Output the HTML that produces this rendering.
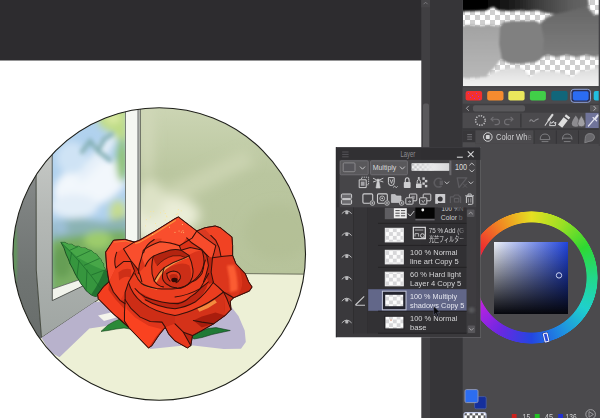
<!DOCTYPE html>
<html lang="en">
<head>
<meta charset="utf-8">
<title>Layer - Multiply</title>
<style>
html,body{margin:0;padding:0;background:#fff;}
body{width:600px;height:418px;overflow:hidden;position:relative;filter:blur(0.6px);font-family:"Liberation Sans","Noto Sans CJK JP",sans-serif;}
svg{position:absolute;left:0;top:0;display:block;opacity:.999;}
text{font-family:"Liberation Sans","Noto Sans CJK JP",sans-serif;}
</style>
</head>
<body>
<svg width="600" height="418" viewBox="0 0 600 418">
<defs>
  <pattern id="chk" width="10" height="10" patternUnits="userSpaceOnUse">
    <rect width="10" height="10" fill="#ffffff"/>
    <rect width="5" height="5" fill="#cfcfcf"/>
    <rect x="5" y="5" width="5" height="5" fill="#cfcfcf"/>
  </pattern>
  <pattern id="chkd" width="5.6" height="5.6" patternUnits="userSpaceOnUse" x="464" y="412.6">
    <rect width="5.6" height="5.6" fill="#ffffff"/><rect width="2.8" height="2.8" fill="#5a5a5c"/><rect x="2.8" y="2.8" width="2.8" height="2.8" fill="#5a5a5c"/>
  </pattern>
  <pattern id="chks" width="5" height="5" patternUnits="userSpaceOnUse">
    <rect width="5" height="5" fill="#ffffff"/>
    <rect width="2.5" height="2.5" fill="#cdcdcd"/>
    <rect x="2.5" y="2.5" width="2.5" height="2.5" fill="#cdcdcd"/>
  </pattern>
  <filter id="b1" x="-20%" y="-20%" width="140%" height="140%"><feGaussianBlur stdDeviation="1"/></filter>
  <filter id="b2" x="-20%" y="-20%" width="140%" height="140%"><feGaussianBlur stdDeviation="2"/></filter>
  <filter id="b3" x="-30%" y="-30%" width="160%" height="160%"><feGaussianBlur stdDeviation="3.5"/></filter>
  <filter id="b6" x="-40%" y="-40%" width="180%" height="180%"><feGaussianBlur stdDeviation="6"/></filter>
  <clipPath id="circ"><circle cx="159.2" cy="254" r="146.2"/></clipPath>
  <clipPath id="glassclip"><path d="M52.2 100 L125.5 100 L125.5 263.9 L52.3 289 Z"/></clipPath>
  <clipPath id="prev"><rect x="463" y="0" width="137" height="86.2"/></clipPath>
</defs>

<!-- ===== canvas & chrome backgrounds ===== -->
<g id="chrome">
<rect x="0" y="0" width="600" height="418" fill="#ffffff"/>
<rect x="0" y="0" width="424" height="60.5" fill="#2d2c2f"/>
<rect x="421.3" y="0" width="8.7" height="418" fill="#403f42"/>
<rect x="430" y="0" width="33" height="418" fill="#363538"/>
<rect x="423" y="103.4" width="6" height="226" rx="2" fill="#5a595c"/>
<rect x="421.3" y="0" width="8.7" height="7.4" fill="#464548"/>
<path d="M423.6 4.2 L425.6 2.2 L427.6 4.2" fill="none" stroke="#7d7c80" stroke-width="0.9"/>
<rect x="462.7" y="0" width="137.3" height="418" fill="#4b4a4d"/>
</g>

<!--ART-S-->
<!-- ===== illustration ===== -->
<defs>
  <linearGradient id="gDark" x1="0" y1="0" x2="0" y2="1">
    <stop offset="0" stop-color="#9d9f9e"/><stop offset="0.4" stop-color="#7f8382"/><stop offset="0.7" stop-color="#6f7472"/><stop offset="1" stop-color="#676c6a"/>
  </linearGradient>
  <linearGradient id="gMid" x1="0" y1="0" x2="0" y2="1">
    <stop offset="0" stop-color="#d2d4d1"/><stop offset="0.5" stop-color="#b4b8b5"/><stop offset="1" stop-color="#9fa5a2"/>
  </linearGradient>
  <linearGradient id="gSky" x1="0" y1="0" x2="0.5" y2="1">
    <stop offset="0" stop-color="#a5c9ea"/><stop offset="0.55" stop-color="#b9d6ee"/><stop offset="1" stop-color="#8db6dc"/>
  </linearGradient>
  <linearGradient id="gWall" gradientUnits="userSpaceOnUse" x1="0" y1="107" x2="0" y2="275">
    <stop offset="0" stop-color="#ccd5b4"/><stop offset="0.22" stop-color="#c2cda8"/><stop offset="0.4" stop-color="#bac69f"/><stop offset="1" stop-color="#b7c39b"/>
  </linearGradient>
</defs>
<g clip-path="url(#circ)">
  <!-- wall -->
  <rect x="0" y="100" width="320" height="310" fill="url(#gWall)"/>
  <g filter="url(#b6)">
    <path d="M138 200 L245 150 L255 164 L138 224 Z" fill="#ced6b4" opacity=".8"/>
    <ellipse cx="164" cy="215" rx="36" ry="19" fill="#eaedd7"/>
    <ellipse cx="150" cy="228" rx="14" ry="14" fill="#eceedb"/>
    <ellipse cx="150" cy="200" rx="14" ry="20" fill="#dde2c6"/>
    <ellipse cx="278" cy="232" rx="34" ry="28" fill="#afbc92" opacity=".5"/>
    <ellipse cx="147" cy="140" rx="7" ry="40" fill="#d3dabb" opacity=".8"/>
  </g>
  <!-- table -->
  <path d="M30 346 L41.5 337.7 L140 271.8 L320 274.2 L320 410 L0 410 Z" fill="#edf0d6"/>
  <path d="M140 272.6 L320 274.3" stroke="#4a4f3c" stroke-width="0.8" fill="none"/>
  <!-- window: outer dark frame -->
  <path d="M0 100 L36 100 L36.3 270 L41.5 337.7 L20 352 L0 352 Z" fill="url(#gDark)"/>
  <ellipse cx="15" cy="255" rx="2.2" ry="30" fill="#5f9e58" filter="url(#b1)" opacity=".8"/>
  <!-- mid frame -->
  <path d="M36 100 L140 100 L140 271.8 L41.5 337.7 L36.3 270 Z" fill="url(#gMid)"/>
  <!-- glass -->
  <path d="M52.2 100 L125.5 100 L125.5 263.9 L52.3 289 Z" fill="url(#gSky)"/>
  <g clip-path="url(#glassclip)">
    <g filter="url(#b3)">
      <rect x="48" y="100" width="82" height="120" fill="#b1d2ee"/>
      <ellipse cx="90" cy="184" rx="38" ry="22" transform="rotate(-20 90 184)" fill="#f2f7fc"/>
      <ellipse cx="72" cy="158" rx="15" ry="16" fill="#cfe3f5"/>
      <ellipse cx="74" cy="206" rx="24" ry="12" fill="#e3eef8"/>
      <ellipse cx="97" cy="158" rx="30" ry="6" transform="rotate(-52 97 158)" fill="#e6f0f9"/>
      <path d="M94 110 L128 104 L128 142 L118 139 L109 132 L100 127 Z" fill="#bedb86"/>
      <ellipse cx="113" cy="118" rx="8" ry="6" fill="#d9e9a2"/>
      <ellipse cx="122" cy="160" rx="6" ry="22" fill="#8fc272"/>
      <ellipse cx="118" cy="212" rx="9" ry="12" fill="#c4db92"/>
      <path d="M50 222 L80 218 L105 222 L128 216 L128 250 L50 250 Z" fill="#8bb3b4"/>
      <path d="M50 240 L75 236 L100 232 L128 230 L128 275 L50 295 Z" fill="#78ad62"/>
      <ellipse cx="98" cy="240" rx="14" ry="9" fill="#9dcc6c"/>
      <ellipse cx="62" cy="262" rx="10" ry="16" fill="#669e55"/>
      <ellipse cx="114" cy="252" rx="10" ry="10" fill="#7db463"/>
      <ellipse cx="60" cy="228" rx="8" ry="6" fill="#9ec0d8"/>
    </g>
    <g filter="url(#b2)" fill="none" stroke="#86b1b6" stroke-width="4.2" stroke-linecap="round">
      <path d="M82 152 L90 141 L98 151 L104 139 M98 151 L110 160 M104 139 L112 134"/>
    </g>
  </g>
  <!-- white strip under glass -->
  <path d="M52.3 289 L125.5 263.9 L125.5 265.6 L78.6 288 L52.3 300.6 Z" fill="#f2f4ec"/>
  <!-- right white frame -->
  <rect x="125.5" y="100" width="12.2" height="170" fill="#f5f7f2"/>
  <rect x="137.5" y="100" width="1.3" height="172" fill="#6f7370"/>
  <rect x="138.8" y="100" width="1" height="172" fill="#e4e7df"/>
  <rect x="139.7" y="100" width="1" height="172" fill="#4c4f4a"/>
  <!-- frame lines -->
  <path d="M36 100 L36.3 270 L41.5 337.7 L140 271.8" fill="none" stroke="#33372f" stroke-width="0.8"/>
  <path d="M52.2 100 L52.3 300.6 L78.6 288 L125.5 265.6" fill="none" stroke="#3a3e38" stroke-width="0.8"/>
  <path d="M52.3 289 L125.5 263.9 M125.5 100 L125.5 264" fill="none" stroke="#4d524a" stroke-width="0.7"/>
  <!-- sill shadow (purple) -->
  <path d="M41.5 337.7 L94.2 302.3 L112 300 L120 318 L106 326 L89.4 328.6 L59.5 357.3 L50 352 Z" fill="#b8b2cc"/>
  <path d="M98 315.5 L111 312.5 L118 317 L104 321 Z" fill="#f4f4ec"/>
  <!-- rose cast shadow -->
  <path d="M225 300 L233 309 L238.5 316 L244.7 330.5 L245.8 342 L241 348.7 L223.6 349 L189 345 L150 349 L140 340 Z" fill="#bcb6d1"/>
<!--LEAVES-S-->
<!-- leaves -->
<g stroke-linejoin="round">
  <path d="M60.9 242.4 L64.6 242.4 L68.4 244.3 L71.6 244.3 L75.1 246.4 L78.6 246.3 L81.8 248.1 L85.2 248 L88.5 249.9 L91.6 250.6 L93.9 253.1 L96.8 254.4 L98.6 257.3 L100.8 259.2 L101.6 261.5 L103.6 264 L103.6 266.5 L105.2 269 L105.6 271.5 L110 272 L111 280 L108 286 L102 290 L100.4 292.4 L98.6 294.8 L96.1 296.5 L93.7 296 L91 294.8 L88.6 292.8 L86 290.6 L83.6 287 L81 283.9 L78.2 279 L75.1 273.9 L72.8 268.8 L70.1 263.8 L68.2 258.8 L65.9 253.8 L64 248 Z" fill="#36963e" stroke="#123c1a" stroke-width="0.8"/>
  <path d="M60.9 242.4 L64.6 242.4 L68.4 244.3 L71.6 244.3 L75.1 246.4 L78.6 246.3 L81.8 248.1 L85.2 248 L88.5 249.9 L91.6 250.6 L93.9 253.1 L96.8 254.4 L98.6 257.3 L100.8 259.2 L101.6 261.5 L103.6 264 L103.6 266.5 L105.2 269 L105.6 271.5 L110 272 Q96 268 78.5 258 Z" fill="#47a748"/>
  <path d="M91 294.8 L93.7 296 L96.1 296.5 L98.6 294.8 L100.4 292.4 L102 290 L108 286 L111 280 L110 272 L104 270 Q100 282 91 294.8 Z" fill="#217230"/>
  <path d="M60.9 242.4 Q80 260 100.3 288 M69.5 250.4 L78 246.6 M76.5 257.2 L90.6 250.6 M84 265.4 L99.6 258.4 M91.4 275 L104.6 270 M71.6 252.4 L69.5 264 M79 260 L76.8 277.6 M87 269.6 L86 290.4" fill="none" stroke="#1b6a2b" stroke-width="0.7"/>
  <path d="M101 331.4 L108 325 L114 321.5 L122 318 L128 322 L133 329.5 L124 328 L116 329 L108 330.5 Z" fill="#2b8a38" stroke="#14401c" stroke-width="0.6"/>
  <path d="M191 336.8 L200 331.5 L208 328.5 L216 327.6 L230.3 330.5 L221 332.5 L212 334.5 L202 337.5 L194 339 Z" fill="#1f7a36" stroke="#123a1c" stroke-width="0.6"/>
</g>
<!--LEAVES-E-->
<!--ROSE-S-->
<!-- rose -->
<g transform="translate(95,212) scale(0.33473)" stroke-linejoin="round" stroke-linecap="round">
  <!-- silhouette -->
  <path d="M55 85 L32 120 L35 165 L42 209 L25 224 L8 247 L10 259 L55 304 L100 344 L160 406 L170 399 L190 369 L210 344 L220 364 L239 385 L276 406 L286 399 L291 369 L319 354 L354 334 L389 309 L406 291 L404 266 L414 256 L461 236 L469 224 L459 209 L449 185 L421 155 L411 130 L411 100 L409 75 L374 47 L359 42 L329 47 L304 57 L249 15 L239 20 L175 60 L132 85 L117 90 L90 82 Z" fill="#e4351a" stroke="#3a1008" stroke-width="3.2"/>
  <!-- L : left petal -->
  <path d="M55 85 L90 82 L117 90 L85 110 L107 147 L85 148 L62 167 L42 209 L35 165 L32 120 Z" fill="#f94c2d"/>
  <path d="M65 120 Q55 145 62 167 L85 148 L107 147 L85 110 Z" fill="#ec3d1f"/>
  <!-- M petal -->
  <path d="M62 167 L85 148 L107 148 L118 176 L108 196 L100 210 L90 240 L75 264 L55 239 L42 209 Z" fill="#ef4021"/>
  <path d="M107 148 L118 176 L108 196 L100 210 L90 240 L100 250 L130 240 L140 209 L127 170 Z" fill="#be2612"/>
  <path d="M70 180 Q90 165 108 172 L108 196 Q88 188 72 205 Z" fill="#ce2f17"/>
  <!-- LL petal -->
  <path d="M42 209 L25 224 L8 247 L10 259 L55 304 L88 326 L88 300 L90 262 L75 264 L55 239 Z" fill="#f33e1f"/>
  <path d="M42 209 L55 239 L75 264 L90 262 L88 290 L62 262 L40 232 Z" fill="#cc2e16"/>
  <!-- T : big upper-left petal -->
  <path d="M85 110 L117 90 L132 85 L175 60 L239 20 L249 15 L304 57 L290 78 L257 100 Q225 88 195 89 Q165 100 145 120 L140 150 L150 185 L160 215 L140 209 L135 190 L127 170 L107 145 Z" fill="#f94e2d"/>
  <path d="M145 122 Q150 98 177 82 Q185 78 200 80 L195 89 Q165 100 145 122 Z" fill="#e54122"/>
  <path d="M145 120 L140 150 L150 185 L160 215 L175 200 L165 165 L160 135 Z" fill="#e13a1e"/>
  <!-- TC -->
  <path d="M304 57 L326 75 L354 95 L361 100 L356 120 L351 137 L334 130 L319 112 L289 92 L274 77 L290 78 Z" fill="#f74b2b"/>
  <!-- TR -->
  <path d="M304 57 L329 47 L359 42 L374 47 L409 75 L411 100 L411 130 L384 132 L351 137 L356 120 L361 100 L354 95 L326 75 Z" fill="#f14223"/>
  <path d="M346 70 L361 85 L371 107 L376 131 L351 137 L356 120 L361 100 L354 95 L326 75 L304 57 L329 52 Z" fill="#da3921"/>
  <!-- R -->
  <path d="M351 137 L384 132 L411 130 L421 155 L449 185 L459 209 L469 224 L461 236 L414 256 L404 266 L406 291 L389 309 L384 239 L339 209 L331 190 L339 160 L334 132 Z" fill="#dc361c"/>
  <path d="M334 132 L351 137 L347 180 L354 212 L368 224 L384 239 L389 309 L360 300 L339 209 L331 190 L339 160 Z" fill="#bb2410"/>
  <path d="M394 160 L416 158 Q428 200 426 234 L404 240 Q404 200 394 160 Z" fill="#fb5b33" filter="url(#b3)"/>
  <path d="M432 170 L449 185 L459 209 L469 224 L461 236 L424 252 Q440 232 440 210 Q438 190 432 170 Z" fill="#cc2b14"/>
  <path d="M384 239 L394 259 L406 291 L404 266 L414 256 L400 240 Z" fill="#c82d16"/>
  <!-- inner rose base -->
  <path d="M145 120 Q165 100 195 89 Q225 88 257 100 L274 77 L289 92 L319 112 L334 130 L339 160 L331 190 L324 209 Q310 250 285 265 Q250 285 200 275 Q150 260 125 225 L120 185 L140 150 Z" fill="#db3319"/>
  <!-- lower bands -->
  <path d="M120 185 Q130 210 150 222 Q190 235 245 229 Q290 215 320 174 L330 144 L339 160 L331 190 L324 209 L339 209 Q320 235 314 229 L354 209 L384 239 Q340 275 289 294 Q260 305 239 309 Q180 300 140 270 Q110 245 100 210 Z" fill="#eb3d1f"/>
  <path d="M120 229 Q150 254 200 269 Q250 278 285 254 Q305 240 315 229 L339 209 Q330 245 299 269 Q270 285 239 289 Q190 285 150 262 Z" fill="#bd2512"/>
  <path d="M100 210 L90 240 L90 262 L108 289 L135 314 L165 327 L200 329 L210 344 L239 334 L239 309 Q180 300 140 270 Q110 245 100 210 Z" fill="#cd2d16"/>
  <path d="M239 309 Q260 305 289 294 Q340 275 384 239 L389 309 L354 334 L319 354 L291 369 L264 359 L239 334 Z" fill="#d43219"/>
  <path d="M294 324 L319 312 L360 300 L389 309 L354 334 L319 345 Z" fill="#a91d0d"/>
  <path d="M305 288 Q335 278 358 262 L364 270 Q340 288 312 298 Z" fill="#f38a3e"/>
  <!-- BR2 -->
  <path d="M239 334 L264 359 L286 399 L276 406 L239 385 L220 364 L210 344 Z" fill="#e7381c"/>
  <path d="M264 359 L291 369 L286 399 Z" fill="#ba2310"/>
  <!-- BF -->
  <path d="M90 262 L88 300 L88 326 L100 344 L160 406 L170 399 L190 369 L210 344 L200 329 L165 327 L135 314 L108 289 Z" fill="#fa4220"/>
  <path d="M90 262 L108 289 L135 314 L165 327 L200 329 L210 344 L200 350 L160 340 L120 315 L95 290 Z" fill="#df351b"/>
  <path d="M160 406 L170 399 L190 369 L210 344 L200 350 L180 375 Z" fill="#ce2d15"/>
  <!-- inner petals -->
  <!-- ring area base -->
  <path d="M139.5 134 L144.5 114 Q165 98 194.5 88.7 Q225 90 252 101 L257 114 L284.5 106 L319.5 113.7 L339.5 133.7 L329.5 148.7 L319.5 183.7 Q305 205 289.5 208.7 Q270 228 244.5 228.7 Q200 232 184.5 228.7 Q150 222 139.5 213.7 Q125 200 129.5 183.7 L132 158.7 Z" fill="#dc351b"/>
  <!-- A rim -->
  <path d="M139.5 134 L144.5 114 Q165 98 194.5 88.7 Q225 90 252 101 L257 114 Q235 108 209.5 118.7 Q190 124 174.5 132 Q158 142 150 162 Z" fill="#f9532f"/>
  <!-- dark under A -->
  <path d="M174.5 132 Q190 124 209.5 118.7 Q235 108 257 114 L279.5 128.7 L282 131 Q262 134 240 146 Q218 158 207 166 Q196 176 188 192 L177 206 Q168 185 169.5 163.7 Q170 146 174.5 132 Z" fill="#e53a1d"/>
  <path d="M174.5 132 Q190 124 209.5 118.7 Q235 108 257 114 L279.5 128.7 L274 137 Q255 127 233 131 Q205 138 186 160 Q176 150 174.5 132 Z" fill="#b32410"/>
  <path d="M186 160 Q205 138 233 131 Q255 127 274 137" fill="none" stroke="#3a1008" stroke-width="2.2"/>
  <!-- left of ring (light) -->
  <path d="M150 162 Q158 142 174.5 132 Q170 146 169.5 163.7 Q168 185 177 206 Q188 222 204.5 223.7 L184.5 228.7 Q150 222 139.5 213.7 Q128 200 129.5 183.7 Z" fill="#f14423"/>
  <!-- top-right small petals -->
  <path d="M257 114 L284.5 106 L319.5 113.7 L329.5 148.7 L319.5 183.7 Q305 205 289.5 208.7 Q296 190 292 168.7 Q290 150 279.5 128.7 Z" fill="#db341b"/>
  <path d="M257 114 L284.5 106 L319.5 113.7 Q300 116 279.5 128.7 Z" fill="#f34827"/>
  <path d="M319.5 113.7 L339.5 133.7 L329.5 148.7 L319.5 183.7 Q332 150 319.5 113.7 Z" fill="#c92d17"/>
  <!-- inner petal -->
  <path d="M207 166 Q235 148 264.5 138.7 L282 131 Q290 150 292 168.7 Q296 190 284.5 208.7 Q270 228 244.5 226.2 Q228 226 219.5 218.7 Q205 210 202 198.7 Q200 185 207 166 Z" fill="#eb3d1e"/>
  <path d="M204.5 173.7 Q225 160 250 155 Q270 152 282 160 Q290 180 284.5 208.7 Q270 228 244.5 226.2 Q228 226 219.5 218.7 Q205 210 202 198.7 Z" fill="#cb2e17"/>
  <!-- highlights -->
  <path d="M177 206 Q190 180 207 166 Q235 148 264.5 138.7 L282 131 L278 137 Q240 150 212 171 Q196 186 184 210 Z" fill="#f5a050"/>
  <!-- core -->
  <path d="M214.5 183.7 Q224 177 234.5 176.2 Q246 177 252 183.7 Q257 191 254.5 198.7 Q250 208 242 211.2 Q232 212 224.5 206.2 Q215 198 214.5 183.7 Z" fill="#e43c20"/>
  <path d="M222 190 Q232 183 244 187 Q250 193 248 201 Q242 209 232 208 Q224 203 222 190 Z" fill="#bb2712"/>
  <ellipse cx="237.5" cy="203.2" rx="9.5" ry="7" fill="#2f0904"/>
  <path d="M121 94 L134 90 L177 65 L240 25.5" fill="none" stroke="#f6983e" stroke-width="3.2"/>
  <path d="M58 90 L92 87 L114 93" fill="none" stroke="#f4843a" stroke-width="2.4"/>
  <path d="M122 187 Q130 205 141 215 Q152 224 184 231" fill="none" stroke="#f59a46" stroke-width="2.2"/>
  <!-- line art -->
  <g fill="none" stroke="#35100a" stroke-width="3.1">
    <path d="M117 90 L85 110 L107 145 L127 170 L135 190 L140 209"/>
    <path d="M65 120 Q55 145 62 167 L85 148 L107 148 L118 176 L108 196 L100 210 L90 240 L90 262"/>
    <path d="M42 209 L55 239 L75 264 L90 274"/>
    <path d="M145 122 Q150 98 177 82"/>
    <path d="M129.5 183.7 L132 158.7 L139.5 134 L144.5 114 Q165 98 194.5 88.7 Q225 90 252 101 L290 78 L304 57"/>
    <path d="M252 101 L257 114 L284.5 106 L319.5 113.7 L339.5 133.7"/>
    <path d="M304 57 L326 75 L354 95 L361 100 L356 120 L351 137"/>
    <path d="M346 70 L361 85 L371 107 L376 131"/>
    <path d="M274 77 L289 92 L319 112 L334 130 L339 160 L331 190 L324 209"/>
    <path d="M351 137 L384 132 L411 130"/>
    <path d="M351 137 L347 180 L354 212 L368 224 L384 239 L394 259 L406 291"/>
    <path d="M414 256 L384 239"/>
    <path d="M150 162 Q158 142 174.5 132 Q190 124 209.5 118.7 Q235 108 257 114 L279.5 128.7 Q290 150 292 168.7 Q296 190 284.5 208.7 Q270 228 244.5 228.7"/>
    <path d="M174.5 132 Q170 146 169.5 163.7 Q168 185 177 206 Q188 222 204.5 223.7"/>
    <path d="M177 206 Q190 180 207 166 Q235 148 264.5 138.7 L282 131"/>
    <path d="M207 166 Q200 185 202 198.7 Q205 210 219.5 218.7 Q228 226 244.5 226.2"/>
    <path d="M319.5 113.7 Q332 150 319.5 183.7 Q305 205 289.5 208.7"/>
    <path d="M119.5 183.7 Q128 203 139.5 213.7 Q150 222 184.5 228.7 Q215 232 244.5 228.7 Q270 224 289.5 208.7 Q310 195 319.5 173.7 L329.5 143.7"/>
    <path d="M119.5 228.7 Q130 243 149.5 253.7 Q170 263 199.5 268.7 Q225 274 249.5 273.7 Q270 268 284.5 253.7 Q302 243 314.5 228.7 L339.5 183.7"/>
    <path d="M239 254 Q279 249 314 229 L339 209"/>
    <path d="M150 262 Q190 285 239 289 Q270 285 299 269 Q330 245 354 209"/>
    <path d="M100 210 Q110 245 140 270 Q180 300 239 309 Q260 305 289 294 Q340 275 384 239"/>
    <path d="M90 262 L88 300 L88 326 L100 344"/>
    <path d="M90 262 L108 289 L135 314 L165 327 L200 329 L210 344"/>
    <path d="M239 334 L264 359 L286 399"/>
    <path d="M264 359 L291 369"/>
    <path d="M294 324 L319 329 L354 334"/>
    <path d="M214.5 183.7 Q224 177 234.5 176.2 Q246 177 252 183.7 Q257 191 254.5 198.7 Q250 208 242 211.2"/>
    <path d="M214.5 183.7 Q215 198 224.5 206.2"/>
  </g>
  <path d="M55 85 L32 120 L35 165 L42 209 L25 224 L8 247 L10 259 L55 304 L100 344 L160 406 L170 399 L190 369 L210 344 L220 364 L239 385 L276 406 L286 399 L291 369 L319 354 L354 334 L389 309 L406 291 L404 266 L414 256 L461 236 L469 224 L459 209 L449 185 L421 155 L411 130 L411 100 L409 75 L374 47 L359 42 L329 47 L304 57 L249 15 L239 20 L175 60 L132 85 L117 90 L90 82 Z" fill="none" stroke="#38100a" stroke-width="2.9"/>
</g>
<g fill="#ffe58a" opacity=".85"><rect x="153.2" y="210.9" width="0.9" height="0.9"/><rect x="160.0" y="212.3" width="0.9" height="0.9"/><rect x="145.9" y="219.2" width="0.9" height="0.9"/><rect x="182.5" y="230.4" width="0.9" height="0.9"/><rect x="175.9" y="214.2" width="0.9" height="0.9"/><rect x="166.1" y="215.7" width="0.9" height="0.9"/><rect x="150.4" y="211.0" width="0.9" height="0.9"/><rect x="152.2" y="234.0" width="0.9" height="0.9"/><rect x="178.6" y="230.6" width="0.9" height="0.9"/><rect x="177.4" y="213.4" width="0.9" height="0.9"/><rect x="156.3" y="225.6" width="0.9" height="0.9"/><rect x="174.5" y="231.9" width="0.9" height="0.9"/><rect x="180.8" y="210.4" width="0.9" height="0.9"/><rect x="169.1" y="226.8" width="0.9" height="0.9"/><rect x="164.8" y="213.0" width="0.9" height="0.9"/><rect x="163.4" y="210.5" width="0.9" height="0.9"/><rect x="183.2" y="232.2" width="0.9" height="0.9"/><rect x="166.5" y="216.4" width="0.9" height="0.9"/><rect x="182.1" y="224.0" width="0.9" height="0.9"/><rect x="180.9" y="231.7" width="0.9" height="0.9"/><rect x="164.9" y="219.6" width="0.9" height="0.9"/><rect x="168.8" y="220.1" width="0.9" height="0.9"/><rect x="149.9" y="216.5" width="0.9" height="0.9"/><rect x="177.9" y="209.2" width="0.9" height="0.9"/><rect x="145.0" y="225.5" width="0.9" height="0.9"/><rect x="155.1" y="223.0" width="0.9" height="0.9"/></g>
<!--ROSE-E-->
</g>
<circle cx="159.2" cy="254" r="146.3" fill="none" stroke="#1e1f1a" stroke-width="1.1"/>

<!--ART-E-->

<!--PREVIEW-S-->
<!-- ===== sub view preview ===== -->
<defs>
  <linearGradient id="gTopBand" x1="0" y1="0" x2="1" y2="0">
    <stop offset="0" stop-color="#000"/><stop offset="0.2" stop-color="#050505"/><stop offset="0.45" stop-color="#222"/><stop offset="0.62" stop-color="#404040"/><stop offset="0.85" stop-color="#5c5c5c"/><stop offset="1" stop-color="#666"/>
  </linearGradient>
  <linearGradient id="gMidCloud" x1="0" y1="0" x2="1" y2="0">
    <stop offset="0" stop-color="#b0b0b0"/><stop offset="0.22" stop-color="#a6a6a6"/><stop offset="0.34" stop-color="#828282"/><stop offset="0.62" stop-color="#7b7b7b"/><stop offset="0.78" stop-color="#8c8c8c"/><stop offset="1" stop-color="#878787"/>
  </linearGradient>
  <linearGradient id="gLeftCloud" x1="0" y1="0" x2="0" y2="1"><stop offset="0" stop-color="#a2a2a2"/><stop offset="1" stop-color="#b8b8b8"/></linearGradient>
  <linearGradient id="gRightCloud" x1="0" y1="0" x2="0" y2="1"><stop offset="0" stop-color="#666666"/><stop offset="1" stop-color="#7e7e7e"/></linearGradient>
  <linearGradient id="gLowCloud" x1="0" y1="0" x2="0" y2="1">
    <stop offset="0" stop-color="#dadada"/><stop offset="1" stop-color="#f6f6f6"/>
  </linearGradient>
</defs>
<g clip-path="url(#prev)">
  <rect x="462" y="0" width="138" height="87" fill="url(#chk)"/>
  <g filter="url(#b1)">
    <!-- lower light cloud -->
    <path d="M460 78 L472 79 L486 77 L492 73 L500 70 L510 68 L521 68 L526 72 L530 77 L535 73 L541 71 L550 71 L558 72 L566 74 L572 77 L576 74 L580 71 L588 70 L596 68 L602 67 L602 90 L460 90 Z" fill="url(#gLowCloud)"/>
    <!-- mid-left cloud -->
    <path d="M460 26 L470 25 L480 26 L490 25 L502 27 L504 60 L500 60 L496 66 L490 72 L486 77 L472 78 L460 78 Z" fill="url(#gLeftCloud)"/>
    <!-- right cloud -->
    <path d="M540 24 L546 18 L554 14 L562 11 L572 8 L586 5 L590 10 L594 15 L602 14 L602 55 L594 57 L586 55 L576 57 L566 55 L556 57 L548 55 L540 58 Z" fill="url(#gRightCloud)"/>
    <!-- centre cloud -->
    <path d="M500 26 L504 22 L512 21 L524 21 L536 21 L541 24 L544 40 L542 58 L536 62 L528 63 L518 64 L508 63 L502 60 L499 44 Z" fill="#808080"/>
    <!-- top dark band -->
    <path d="M460 -2 L588 -2 L589 6 L580 8 L566 12 L556 14 L546 13 L538 10.5 L528 11 L520 10.5 L510 11 L500 10.5 L497 9.5 L494 7 L490 8 L486 10.5 L474 11 L460 11.5 Z" fill="url(#gTopBand)"/>
  </g>
</g>
<rect x="462.7" y="86.2" width="137.3" height="1.2" fill="#39383b"/>
<!--PREVIEW-E-->

<!--RIGHT-S-->
<!-- ===== right panel ===== -->
<g id="rightpanel">
  <!-- swatch row -->
  <rect x="462.7" y="87.4" width="137.3" height="16.4" fill="#4b4a4d"/>
  <rect x="465.6" y="91" width="16.5" height="9.6" rx="2" fill="#f3302e"/>
  <g fill="#b22ad0"><rect x="468" y="93" width="1" height="1"/><rect x="472" y="95" width="1" height="1"/><rect x="476" y="93" width="1" height="1"/><rect x="470" y="97" width="1" height="1"/><rect x="478" y="96" width="1" height="1"/><rect x="474" y="98" width="1" height="1"/><rect x="479" y="99" width="1" height="1"/></g>
  <rect x="487.2" y="91" width="16.3" height="9.6" rx="2" fill="#f58b2f"/>
  <rect x="508.3" y="91" width="16.3" height="9.6" rx="2" fill="#ebe75c"/>
  <rect x="529.9" y="91" width="16" height="9.6" rx="2" fill="#41cf48"/>
  <rect x="551.3" y="91" width="16.3" height="9.6" rx="2" fill="#11667a"/>
  <rect x="570.9" y="89.3" width="19.6" height="13" rx="3" fill="#2a2f55" stroke="#8fa2d6" stroke-width="1"/>
  <rect x="572.8" y="91.2" width="15.8" height="9.2" rx="1.8" fill="#2b6cf2"/>
  <rect x="593.7" y="91" width="10" height="9.6" rx="2" fill="#21bfe2"/>
  <!-- scrollbar row -->
  <rect x="462.7" y="103.8" width="137.3" height="9" fill="#3f3e41"/>
  <rect x="473" y="105.3" width="52" height="6.2" rx="2" fill="#59585b"/>
  <path d="M468.8 105.8 L466.4 108.3 L468.8 110.8" fill="none" stroke="#a4a3a6" stroke-width="1"/>
  <rect x="590" y="105" width="9.4" height="6.8" rx="1" fill="#58575a"/>
  <path d="M593.6 106 L595.8 108.3 L593.6 110.6" fill="none" stroke="#b4b3b6" stroke-width="1"/>
  <!-- toolbar row -->
  <rect x="462.7" y="112.8" width="137.3" height="15.4" fill="#4b4a4d"/>
  <rect x="585.5" y="112.8" width="14.5" height="15.4" fill="#70749a"/>
  <rect x="520" y="113.5" width="1.6" height="14" fill="#3b3a3d"/>
  <circle cx="480.4" cy="120.5" r="4.8" fill="none" stroke="#b9b8bb" stroke-width="1.6" stroke-dasharray="1.3 1.2"/>
  <g fill="none" stroke="#717074" stroke-width="1.1">
    <path d="M491.6 119.2 L497 119.2 Q499.5 119.4 499.5 122 Q499.5 124.6 496.8 124.6 L494.6 124.6"/>
    <path d="M493.4 117 L491 119.2 L493.4 121.4"/>
    <path d="M512.4 119.2 L507 119.2 Q504.5 119.4 504.5 122 Q504.5 124.6 507.2 124.6 L509.4 124.6"/>
    <path d="M510.6 117 L513 119.2 L510.6 121.4"/>
  </g>
  <path d="M529.6 121.4 Q531 118.6 532.4 120.6 Q533.8 122.6 535.4 120.2 L538.6 118.8" fill="none" stroke="#8b8a8e" stroke-width="1.1"/>
  <!-- pen + fill -->
  <g stroke="#d6d6d6" fill="none" stroke-width="1.5" stroke-linecap="round">
    <path d="M545.2 125.2 L548.6 120.2" stroke-width="1.1"/>
    <path d="M548.6 120.2 L552.4 114.8" stroke-width="2.2"/>
  </g>
  <path d="M549.6 125.6 L550.4 121.8 L552 123.4 L553.4 121.2 L554.6 123.4 L555.8 122 L555.4 125.6 Z" fill="none" stroke="#d0d0d2" stroke-width="1"/>
  <!-- bottle -->
  <path d="M558 124.5 L563.6 117.2 L567.8 120.4 L562.2 127.7 Z" fill="#dedede"/>
  <path d="M564.6 116.2 L566 114.3 L570.2 117.5 L568.8 119.4 Z" fill="#dedede"/>
  <!-- drops -->
  <path d="M575.8 115.6 Q579.8 121 579.8 123.6 Q579.8 126.8 575.8 126.8 Q571.8 126.8 571.8 123.6 Q571.8 121 575.8 115.6 Z" fill="#8d8c90"/>
  <path d="M581.4 115.6 Q585 121 585 123.6 Q585 126.8 581.4 126.8 Q577.8 126.8 577.8 123.6 Q577.8 121 581.4 115.6 Z" fill="#a09fa3" stroke="#4b4a4d" stroke-width="0.6"/>
  <!-- eyedropper -->
  <g stroke="#e2e3ee" fill="none" stroke-linecap="round">
    <path d="M588.4 126 L594.2 119.4" stroke-width="1.2"/>
    <path d="M593 117.6 L596.6 120.8" stroke-width="1.3"/>
    <path d="M595.4 118.4 L597.8 115.4" stroke-width="2.2"/>
  </g>
  <!-- gap + tabs -->
  <rect x="462.7" y="128.2" width="137.3" height="2.2" fill="#39383b"/>
  <rect x="462.7" y="130.4" width="137.3" height="13.4" fill="#414043"/>
  <rect x="462.7" y="130.4" width="12.8" height="13.4" fill="#38373a"/>
  <rect x="475.5" y="130.4" width="58" height="13.4" fill="#4b4a4d"/>
  <rect x="533.5" y="130.4" width="1" height="13.4" fill="#353437"/>
  <rect x="555.8" y="130.4" width="1" height="13.4" fill="#353437"/>
  <rect x="578" y="130.4" width="1" height="13.4" fill="#353437"/>
  <rect x="462.7" y="142.2" width="12.8" height="4.8" fill="#4d4c4f"/>
  <g stroke="#77767a" stroke-width="0.9"><path d="M467.2 134.6 H472 M467.2 136.9 H472 M467.2 139.2 H472"/></g>
  <circle cx="487.8" cy="137" r="4.3" fill="none" stroke="#d2d2d4" stroke-width="1"/>
  <rect x="485.9" y="135.1" width="3.8" height="3.8" rx="0.6" fill="#d2d2d4"/>
  <text x="496" y="140.1" font-size="8.2" fill="#cfcfd1" textLength="35.6" lengthAdjust="spacingAndGlyphs">Color Whe</text>
  <rect x="527" y="131" width="6.5" height="12.5" fill="#4b4a4d" opacity=".65"/>
  <g fill="none" stroke="#858488" stroke-width="0.9">
    <path d="M540.2 139.6 Q540.2 134 545 134 Q549.8 134 549.8 139.6 M540.2 139.6 H549.8 M541.6 141.6 H548.4"/>
    <path d="M562.4 139.6 Q562.4 134 567.2 134 Q572 134 572 139.6 M562.4 138.2 H572 M563.8 141.6 H570.6"/>
    <path d="M585.2 138.6 Q585.2 133.6 590 133.6 Q594.8 133.6 594.4 138 Q593.4 141.6 589 141.4 L584.8 142.8 Z" fill="#68676b"/>
  </g>
  <rect x="598.7" y="0" width="1.3" height="146" fill="#434245"/>
  <!-- bottom colour chips -->
  <rect x="474.6" y="396.6" width="11.6" height="12.2" rx="1.5" fill="#152f9c" stroke="#4a5c9c" stroke-width="0.9"/>
  <rect x="465" y="389.6" width="13" height="13" rx="1.5" fill="#2c6df0" stroke="#8c94b4" stroke-width="1"/>
  <rect x="464" y="412.6" width="22" height="8" rx="2" fill="url(#chkd)" stroke="#c2c9e6" stroke-width="1.1"/>
  <rect x="511.8" y="414" width="4.8" height="5" fill="#c9221d"/>
  <rect x="534.8" y="414" width="4.8" height="5" fill="#22c024"/>
  <rect x="558.2" y="414" width="4.8" height="5" fill="#2231d2"/>
  <g font-size="9" fill="#d0d0d2">
    <text x="522.6" y="419.6" textLength="7.6" lengthAdjust="spacingAndGlyphs">15</text>
    <text x="544.8" y="419.6" textLength="8.2" lengthAdjust="spacingAndGlyphs">45</text>
    <text x="565.6" y="419.6" textLength="11" lengthAdjust="spacingAndGlyphs">136</text>
  </g>
  <circle cx="590.6" cy="414.4" r="4.8" fill="none" stroke="#a9a8ac" stroke-width="0.9"/>
  <path d="M589 411.6 L593.4 414.4 L589 417.2 Z" fill="none" stroke="#a9a8ac" stroke-width="0.8"/>
</g>
<!--RIGHT-E-->

</svg>
<!-- ===== colour wheel ===== -->
<div id="wheel" style="position:absolute;left:465.1px;top:211.1px;width:132.8px;height:132.8px;border-radius:50%;
background:conic-gradient(from 0deg,#e6e022 0deg,#9be024 30deg,#2fd832 60deg,#22d88a 90deg,#1fd0cc 120deg,#1f8fe0 150deg,#2346e2 180deg,#6a28e2 210deg,#b622e0 240deg,#e6229a 270deg,#ee2a30 300deg,#f08a22 330deg,#e6e022 360deg);
-webkit-mask:radial-gradient(circle closest-side,transparent 0,transparent 82.2%,#000 83.4%,#000 99%,transparent 100%);
mask:radial-gradient(circle closest-side,transparent 0,transparent 82.2%,#000 83.4%,#000 99%,transparent 100%);"></div>
<div id="svsq" style="position:absolute;left:494.4px;top:242px;width:73.2px;height:72.1px;
background:linear-gradient(to bottom,rgba(0,0,0,0) 0%,rgba(4,5,12,.55) 55%,#05060c 100%),linear-gradient(to right,#eef1f8 0%,#2044de 100%);"></div>
<svg width="600" height="418" viewBox="0 0 600 418">
<defs>
  <pattern id="chkt" width="7.6" height="7.6" patternUnits="userSpaceOnUse" x="385.3" y="228.3">
    <rect width="7.6" height="7.6" fill="#fbfbfb"/><rect width="3.8" height="3.8" fill="#d6d6d8"/><rect x="3.8" y="3.8" width="3.8" height="3.8" fill="#d6d6d8"/>
  </pattern>
  <pattern id="chkop" width="5" height="5" patternUnits="userSpaceOnUse" x="411.7" y="163.4">
    <rect width="5" height="5" fill="#f4f4f4"/><rect width="2.5" height="2.5" fill="#bdbdbf"/><rect x="2.5" y="2.5" width="2.5" height="2.5" fill="#bdbdbf"/>
  </pattern>
  <linearGradient id="opfade" x1="0" y1="0" x2="1" y2="0"><stop offset="0" stop-color="#e9e9ea" stop-opacity="0"/><stop offset="0.6" stop-color="#e9e9ea" stop-opacity="1"/><stop offset="1" stop-color="#d8d8da" stop-opacity="1"/></linearGradient>
  <linearGradient id="fadeR" x1="0" y1="0" x2="1" y2="0"><stop offset="0" stop-color="#323134" stop-opacity="0"/><stop offset="1" stop-color="#323134" stop-opacity="1"/></linearGradient>
</defs>
<g id="wheelmarks">
  <circle cx="559" cy="275.4" r="2.7" fill="none" stroke="#cfd6f2" stroke-width="1"/>
  <g transform="rotate(-14 546.1 337.5)">
    <rect x="543.3" y="332.3" width="5.6" height="10.4" rx="0.8" fill="#1b2a7a"/>
    <rect x="544.2" y="333.2" width="3.8" height="8.6" rx="0.4" fill="#2a4ad8" stroke="#f2f4ff" stroke-width="1.1"/>
  </g>
</g>
<!--LAYER-S-->
<!-- ===== floating Layer panel ===== -->
<g id="layerpanel">
  <rect x="335.4" y="147" width="145.6" height="190.6" fill="#c9c9cb" opacity=".4"/>
  <rect x="335.9" y="147.2" width="144.6" height="190" fill="#3b3a3d"/>
  <rect x="335.9" y="147.2" width="1" height="190" fill="#2b2a2d"/>
  <!-- title -->
  <rect x="336.6" y="147.6" width="143.9" height="12.3" fill="#313033"/>
  <path d="M342.2 152 H348.6 M342.2 154.4 H348.6 M342.2 156.8 H348.6" stroke="#59585c" stroke-width="0.9"/>
  <text x="400.4" y="157" font-size="8.2" fill="#8f8e92" textLength="14.8" lengthAdjust="spacingAndGlyphs">Layer</text>
  <path d="M456.9 157.2 H462.8" stroke="#d6d6d8" stroke-width="1.1"/>
  <path d="M467.8 151.4 L473.6 157.2 M473.6 151.4 L467.8 157.2" stroke="#d6d6d8" stroke-width="1.1"/>
  <!-- tool rows bg -->
  <rect x="339.4" y="159.9" width="136.8" height="47.6" fill="#464548"/>
  <rect x="336.6" y="159.9" width="2.8" height="47.6" fill="#323134"/>
  <!-- dropdowns -->
  <rect x="340.2" y="160.8" width="28" height="14" rx="1" fill="#59585b" stroke="#757478" stroke-width="0.8"/>
  <rect x="343.2" y="162.9" width="11.8" height="8.8" rx="1" fill="#56555a" stroke="#8e8d91" stroke-width="0.9"/>
  <path d="M360 166.6 L362.5 169.2 L365 166.6" fill="none" stroke="#cfcfd1" stroke-width="0.9"/>
  <rect x="370.6" y="160.8" width="36.8" height="14" rx="1" fill="#59585b" stroke="#757478" stroke-width="0.8"/>
  <text x="372.7" y="170.2" font-size="8" fill="#d9d9db" textLength="23.6" lengthAdjust="spacingAndGlyphs">Multiply</text>
  <path d="M400 166.6 L402.4 169.2 L404.8 166.6" fill="none" stroke="#cfcfd1" stroke-width="0.9"/>
  <!-- opacity -->
  <rect x="411.7" y="163.4" width="37.6" height="7.2" fill="#e9e9ea"/>
  <rect x="411.7" y="163.4" width="22" height="7.2" fill="url(#chkop)"/>
  <rect x="411.7" y="163.4" width="37.6" height="7.2" fill="url(#opfade)"/>
  <rect x="449.4" y="160.6" width="2" height="14.6" fill="#6b6a6e"/>
  <text x="454.9" y="170.4" font-size="8.8" fill="#dcdcde" textLength="12.2" lengthAdjust="spacingAndGlyphs">100</text>
  <path d="M469.4 165.4 L471.8 163 L474.2 165.4 M469.4 169.6 L471.8 172 L474.2 169.6" fill="none" stroke="#cfcfd1" stroke-width="0.9"/>
<!--ICONS-S-->
  <!-- row 2 icons -->
  <g fill="none" stroke="#cfcfd1" stroke-width="1" stroke-linejoin="round">
    <rect x="361.6" y="177.2" width="7" height="7.6" stroke-dasharray="1.2 0.9" stroke-width="0.9"/>
    <rect x="359.2" y="179.8" width="7" height="7.8" fill="#464548"/>
    <rect x="360.8" y="181.6" width="3.8" height="4.2" fill="#a4a3a7" stroke="none"/>
    <!-- lighthouse -->
    <path d="M376 188 L377.2 181.4 H379 L380.2 188 Z" fill="#cfcfd1" stroke-width="0.6"/>
    <path d="M376.8 179.2 H379.4 V181.2 H376.8 Z" fill="#cfcfd1" stroke-width="0.5"/>
    <path d="M376.4 179.8 L373 178.2 M376.4 180.8 L373 182 M379.8 179.8 L383.3 178.2 M379.8 180.8 L383.3 182" stroke-width="0.9"/>
    <!-- draft cup -->
    <path d="M388.4 177.6 H394.2 V182.6 Q394.2 185.6 391.3 185.6 Q388.4 185.6 388.4 182.6 Z" stroke-width="1"/>
    <path d="M390 179.4 L391.6 183.4 L392.8 179.4" stroke-width="0.8"/>
    <path d="M393.2 187.4 Q394.4 185.4 395.6 187 Q396.6 188.2 397.6 186.4" stroke-width="0.9"/>
    <!-- lock -->
    <rect x="403.8" y="182" width="6.8" height="6" rx="0.8" fill="#cfcfd1" stroke="none"/>
    <path d="M405.3 182 V180.2 Q405.3 177.8 407.2 177.8 Q409.1 177.8 409.1 180.2 V182" stroke-width="1.1"/>
    <!-- lock transparent -->
    <rect x="416" y="183.4" width="5.6" height="4.6" rx="0.6" fill="#cfcfd1" stroke="none"/>
    <path d="M417.2 183.4 V181.6 Q417.2 179.6 418.8 179.6 Q420.4 179.6 420.4 181.6 V183.4" stroke-width="1"/>
    <circle cx="418.8" cy="178" r="1.1" fill="#cfcfd1" stroke="none"/>
    <g fill="#cfcfd1" stroke="none"><rect x="422.4" y="177.4" width="2.4" height="2.4"/><rect x="424.9" y="179.9" width="2.4" height="2.4"/><rect x="422.4" y="182.4" width="2.4" height="2.4"/><rect x="424.9" y="184.9" width="2.4" height="2.4"/></g>
  </g>
  <g fill="none" stroke="#5e5d61" stroke-width="1.6" stroke-linejoin="round">
    <path d="M441.6 179.4 Q437.8 177 435.4 179.8 Q433 183 435.4 185.8 Q437.8 188.2 441.6 186"/>
    <rect x="439.6" y="180.6" width="3.4" height="4.4" fill="#5e5d61" stroke="none"/>
    <path d="M457.2 177.8 H466.8 L459 187.6 Z" stroke-width="1.3"/>
    <path d="M463 183.6 L467 187.6 M467 183.6 L463 187.6" stroke-width="1"/>
  </g>
  <path d="M444.8 181.6 L446.9 183.8 L449 181.6 M468.7 181.6 L470.9 183.8 L473.1 181.6" fill="none" stroke="#cfcfd1" stroke-width="0.9"/>
  <!-- row 3 icons -->
  <g fill="none" stroke="#cfcfd1" stroke-width="1" stroke-linejoin="round">
    <rect x="341.4" y="194" width="10.2" height="4.6" rx="1" fill="#6b6a6e"/>
    <rect x="341.4" y="199.6" width="10.2" height="4.6" rx="1" fill="#6b6a6e"/>
    <!-- new raster -->
    <path d="M369.8 203.2 H364 Q362.9 203.2 362.9 202 V195 Q362.9 193.9 364 193.9 H371.6 Q372.7 193.9 372.7 195 V200.2" stroke-width="1.1"/>
    <circle cx="372.4" cy="203" r="2.3" fill="#464548" stroke-width="0.8"/>
    <path d="M371.2 203 H373.6 M372.4 201.8 V204.2" stroke-width="0.7"/>
    <!-- new vector -->
    <path d="M384.2 203.2 H378.6 Q377.5 203.2 377.5 202 V195 Q377.5 193.9 378.6 193.9 H386.2 Q387.3 193.9 387.3 195 V200.2" stroke-width="1.1"/>
    <circle cx="382.2" cy="198.4" r="2.4" stroke-width="0.8"/>
    <circle cx="382.2" cy="198.4" r="0.8" fill="#cfcfd1" stroke="none"/>
    <circle cx="387" cy="203" r="2.3" fill="#464548" stroke-width="0.8"/>
    <path d="M385.8 203 H388.2 M387 201.8 V204.2" stroke-width="0.7"/>
    <!-- folder -->
    <path d="M391.4 202.4 V194.6 H395.2 L396.4 196 H401 V202.4 Z" fill="#bdbdc0" stroke-width="0.7"/>
    <circle cx="401.6" cy="203" r="2.3" fill="#464548" stroke-width="0.8"/>
    <path d="M400.4 203 H402.8 M401.6 201.8 V204.2" stroke-width="0.7"/>
    <!-- transfer / merge -->
    <rect x="409.4" y="194" width="7.4" height="6.8" rx="0.8"/>
    <rect x="411.4" y="195.8" width="3.4" height="3" fill="#8a898d" stroke="none"/>
    <rect x="405.8" y="197.8" width="7.2" height="6.4" rx="0.8" fill="#464548"/>
    <path d="M408 201.6 H410.8 M409.4 200.4 L410.8 201.6 L409.4 202.8" stroke-width="0.6"/>
    <rect x="423.2" y="194" width="7.6" height="6.8" rx="0.8"/>
    <rect x="419.6" y="197.8" width="7.2" height="6.4" rx="0.8" fill="#464548"/>
    <path d="M421.6 200 L423.2 202.6 L425 199.6" stroke-width="0.7"/>
    <!-- mask -->
    <rect x="435.2" y="194" width="10" height="9.8" rx="0.6" fill="#cdcdd0" stroke="none"/>
    <circle cx="440.2" cy="198.9" r="2.5" fill="#39383b" stroke="none"/>
    <!-- trash -->
    <path d="M466.4 196.6 H472.8 V203.4 Q472.8 204.3 471.8 204.3 H467.4 Q466.4 204.3 466.4 203.4 Z"/>
    <path d="M465.2 195.8 H474 M468 195.6 V194 H471.2 V195.6" stroke-width="0.9"/>
    <path d="M468.4 198.2 V202.6 M470.8 198.2 V202.6" stroke-width="0.6"/>
  </g>
  <g fill="none" stroke="#5e5d61" stroke-width="1.2" stroke-linejoin="round">
    <path d="M450.4 196.8 H453.4 L454.6 195 H458.6 L459.6 196.8 H460.6 V203.6 H450.4 Z"/>
    <rect x="454.4" y="198.4" width="4.4" height="3.6"/>
  </g>
<!--ICONS-E-->
  <!-- list -->
  <rect x="336.6" y="207.5" width="17" height="126" fill="#3a393c"/>
  <rect x="353.6" y="207.5" width="14" height="126" fill="#363538"/>
  <rect x="353.2" y="207.5" width="0.8" height="126" fill="#2d2c2f"/>
  <rect x="367.4" y="207.5" width="0.8" height="126" fill="#2d2c2f"/>
  <rect x="368.2" y="207.5" width="98.4" height="126" fill="#323134"/>
  <rect x="466.6" y="207.5" width="9.6" height="126" fill="#3e3d40"/>
  <rect x="368.2" y="289.2" width="98.4" height="21.6" fill="#626789"/>
  <g stroke="#222124" stroke-width="0.9">
    <path d="M378 223.3 H466.6 M378 245.4 H466.6 M378 267.3 H466.6 M378 311.2 H466.6 M378 333.2 H466.6"/>
  </g>
  <!-- eyes -->
  <g id="eyes">
    <g id="eye"><path d="M341.8 213.6 Q346.7 208 351.6 213.6" fill="none" stroke="#b9b9bb" stroke-width="1"/><rect x="345.3" y="210.8" width="3" height="3.4" rx="0.8" fill="#b9b9bb"/></g>
    <use href="#eye" y="21.9"/><use href="#eye" y="43.8"/><use href="#eye" y="65.7"/><use href="#eye" y="87.4"/><use href="#eye" y="109.3"/>
  </g>
  <!-- pen -->
  <path d="M355.4 305 L364.2 296.4 M355.4 305.2 H365" fill="none" stroke="#c9c9cb" stroke-width="1.1"/>
  <!-- row 0 -->
  <rect x="384.8" y="207.8" width="9" height="11.4" fill="#5f5e62"/>
  <rect x="393.8" y="208.2" width="13" height="10.2" fill="#f0f0f0"/>
  <path d="M395.4 210.6 H405.2 M395.4 213.2 H405.2 M395.4 215.8 H405.2" stroke="#4a494c" stroke-width="1"/>
  <path d="M400.3 209 V218" stroke="#f0f0f0" stroke-width="1.2"/>
  <path d="M408 213.6 L410.2 216 L414.2 211" fill="none" stroke="#d4d4d6" stroke-width="0.9"/>
  <rect x="415.4" y="207.6" width="19.2" height="10.8" fill="#050505"/>
  <circle cx="422.8" cy="210" r="1.4" fill="#f4f4f4"/>
  <path d="M415.4 219.8 H434.6" stroke="#8a898d" stroke-width="0.9"/>
  <g font-size="8" fill="#cfcfd1">
    <text x="441.6" y="211.2" textLength="22" lengthAdjust="spacingAndGlyphs">100 %N</text>
    <text x="440.8" y="219.8" textLength="21.8" lengthAdjust="spacingAndGlyphs">Color b</text>
  </g>
  <rect x="438" y="203" width="30" height="4.5" fill="#464548"/>
  <rect x="457" y="207.5" width="9.6" height="15" fill="#323134" opacity=".6"/>
  <!-- thumbnails -->
  <g stroke="#eeeeef" stroke-width="1">
    <rect x="385.3" y="228.3" width="18" height="13.6" fill="url(#chkt)"/>
    <rect x="385.3" y="250.3" width="18" height="13.6" fill="url(#chkt)"/>
    <rect x="385.3" y="272.2" width="18" height="13.6" fill="url(#chkt)"/>
  </g>
  <rect x="382.4" y="291.2" width="23.6" height="18.6" fill="#23242e" stroke="#c3c7da" stroke-width="1"/>
  <rect x="385.2" y="294.8" width="18" height="11.4" fill="url(#chkt)"/>
  <rect x="384.2" y="315.8" width="20.2" height="13.6" fill="#232225"/>
  <rect x="385.4" y="316.8" width="18" height="11.6" fill="url(#chkt)"/>
  <rect x="390.4" y="319.6" width="1.2" height="1" fill="#c25a30"/>
  <!-- row 1 icon -->
  <rect x="413.3" y="227.3" width="12" height="11.4" fill="#3c3b3e" stroke="#ececee" stroke-width="1.1"/>
  <path d="M415 236.6 L415 233.6 L418.6 233.6 L418.6 236.6 M415 230 H423.4" fill="none" stroke="#c9c9cb" stroke-width="0.8"/>
  <circle cx="422.4" cy="235.6" r="1.9" fill="#3c3b3e" stroke="#ececee" stroke-width="0.8"/>
  <path d="M423.6 237 L425.4 239" stroke="#ececee" stroke-width="0.9"/>
  <!-- texts -->
  <g font-size="8.1" fill="#d6d6d8">
    <text x="428.7" y="233" textLength="35.5" lengthAdjust="spacingAndGlyphs">75 % Add (G</text>
    <text x="428.9" y="241.9" font-size="7.6" textLength="35.4" lengthAdjust="spacingAndGlyphs">光芒フィルター</text>
    <text x="410" y="255.4" textLength="47.4" lengthAdjust="spacingAndGlyphs">100 % Normal</text>
    <text x="410" y="264.1" textLength="48.6" lengthAdjust="spacingAndGlyphs">line art Copy 5</text>
    <text x="410" y="277.3" textLength="51" lengthAdjust="spacingAndGlyphs">60 % Hard light</text>
    <text x="410" y="285.6" textLength="51.3" lengthAdjust="spacingAndGlyphs">Layer 4 Copy 5</text>
    <text x="410" y="299.2" fill="#e6e7f0" textLength="47" lengthAdjust="spacingAndGlyphs">100 % Multiply</text>
    <text x="410" y="307.7" fill="#e6e7f0" textLength="54.4" lengthAdjust="spacingAndGlyphs">shadows Copy 5</text>
    <text x="410" y="321" textLength="47.4" lengthAdjust="spacingAndGlyphs">100 % Normal</text>
    <text x="410" y="329.5" textLength="16.6" lengthAdjust="spacingAndGlyphs">base</text>
  </g>
  <rect x="456" y="224" width="10.6" height="21" fill="url(#fadeR)"/>
  <!-- scroll buttons -->
  <rect x="466.9" y="209.4" width="7.6" height="7.6" rx="1" fill="#58575b"/>
  <path d="M468.6 214.2 L470.7 212.1 L472.8 214.2" fill="none" stroke="#a9a8ac" stroke-width="0.9"/>
  <rect x="467.7" y="325.4" width="7.4" height="7.6" rx="1" fill="#58575b"/>
  <path d="M469.3 328.2 L471.4 330.3 L473.5 328.2" fill="none" stroke="#a9a8ac" stroke-width="0.9"/>
  <ellipse cx="471.6" cy="310" rx="3.2" ry="3" fill="#59585c" filter="url(#b1)"/>
  <!-- cursor -->
  <path d="M433.7 306.2 L433.7 315 L435.8 313.2 L437.4 316.6 L438.8 315.9 L437.3 312.6 L440 312.4 Z" fill="#0c0c0e" stroke="#60647e" stroke-width="0.5"/>
</g>
<!--LAYER-E-->

</svg>
</body>
</html>
